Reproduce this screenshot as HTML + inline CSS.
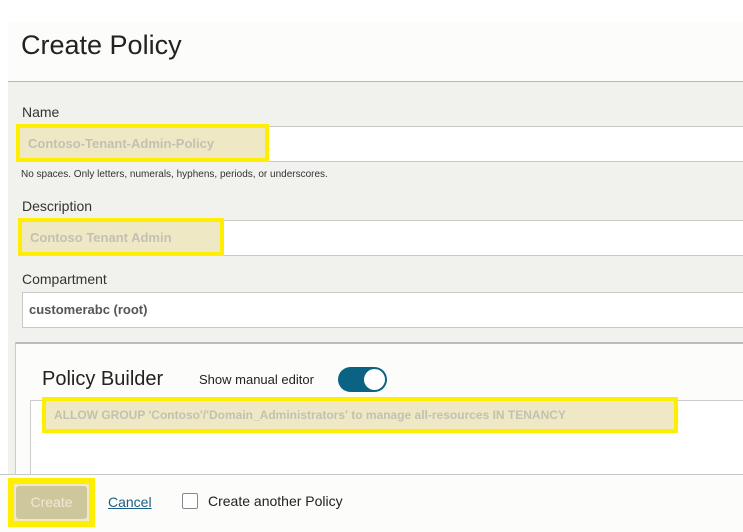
<!DOCTYPE html>
<html><head><style>
body{margin:0;width:743px;height:531px;background:#fff;font-family:"Liberation Sans",sans-serif;position:relative;overflow:hidden}
.a{position:absolute}
.lbl{font-size:14px;color:#333}
.inp{background:#fff;border:1px solid #c8c8c4;border-right:none}
.yb{border:4px solid #ffee00;background:#efe8c4;box-sizing:border-box;color:#c3c0b4;font-size:13px;font-weight:bold;padding-left:8px;display:flex;align-items:center}
</style></head><body>
<div class="a" style="left:8px;top:22px;width:735px;height:59px;background:#fcfcfa;border-bottom:1px solid #b8b8b4"></div>
<div class="a" style="left:21px;top:30px;font-size:27px;color:#222">Create Policy</div>
<div class="a" style="left:8px;top:82px;width:735px;height:392px;background:#f1f1ed"></div>
<div class="a lbl" style="left:22px;top:104px">Name</div>
<div class="a inp" style="left:22px;top:126px;width:721px;height:34px"></div>
<div class="a yb" style="left:16px;top:124px;width:253px;height:38px">Contoso-Tenant-Admin-Policy</div>
<div class="a" style="left:21px;top:169px;font-size:10px;color:#333">No spaces. Only letters, numerals, hyphens, periods, or underscores.</div>
<div class="a lbl" style="left:22px;top:198px">Description</div>
<div class="a inp" style="left:22px;top:220px;width:721px;height:34px"></div>
<div class="a yb" style="left:18px;top:218px;width:206px;height:38px">Contoso Tenant Admin</div>
<div class="a lbl" style="left:22px;top:271px">Compartment</div>
<div class="a inp" style="left:22px;top:292px;width:721px;height:34px"></div>
<div class="a" style="left:29px;top:302px;font-size:13px;font-weight:bold;color:#555">customerabc (root)</div>
<div class="a" style="left:15px;top:342px;width:728px;height:132px;background:#fcfcfa;border-top:2px solid #bbb;border-left:1px solid #ccc"></div>
<div class="a" style="left:42px;top:368px;font-size:20px;color:#222">Policy Builder</div>
<div class="a" style="left:199px;top:372px;font-size:13px;color:#222">Show manual editor</div>
<div class="a" style="left:338px;top:367px;width:49px;height:25px;border-radius:13px;background:#0b6384"></div>
<div class="a" style="left:364px;top:369px;width:21px;height:21px;border-radius:50%;background:#fff"></div>
<div class="a" style="left:30px;top:400px;width:713px;height:74px;background:#fff;border:1px solid #ccc;border-right:none;border-bottom:none"></div>
<div class="a yb" style="left:42px;top:397px;width:636px;height:36px;font-size:12px">ALLOW GROUP 'Contoso'/'Domain_Administrators' to manage all-resources IN TENANCY</div>
<div class="a" style="left:0;top:474px;width:743px;height:57px;background:#fcfcfa;border-top:1px solid #c8c8c4"></div>
<div class="a" style="left:8px;top:478px;width:87px;height:49px;background:#ffee00"></div>
<div class="a" style="left:14px;top:484px;width:75px;height:37px;background:#f0e9c6"></div>
<div class="a" style="left:16px;top:486px;width:71px;height:33px;background:#cfc79c;border-radius:3px;color:#eee9d4;font-size:14px;text-align:center;line-height:33px">Create</div>
<div class="a" style="left:108px;top:494px;font-size:14px;color:#1d5f86;text-decoration:underline">Cancel</div>
<div class="a" style="left:182px;top:493px;width:14px;height:14px;border:1px solid #888;border-radius:2px;background:#fff"></div>
<div class="a" style="left:208px;top:493px;font-size:14px;color:#222">Create another Policy</div>
</body></html>
